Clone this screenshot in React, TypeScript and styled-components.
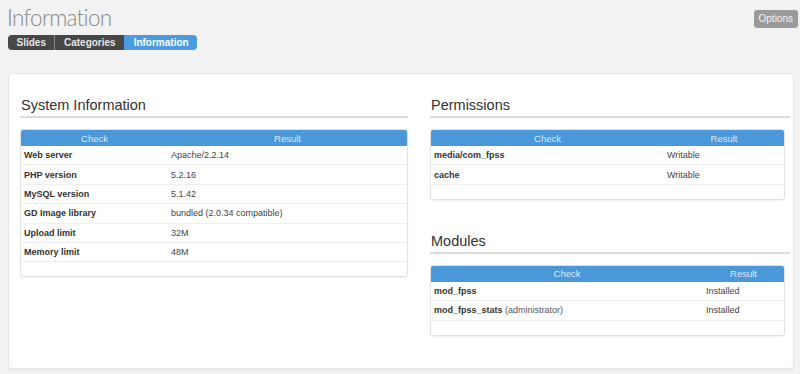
import React from "react";
import styled, { createGlobalStyle } from "styled-components";

const Global = createGlobalStyle`
    html, body{
        margin:0;
        padding:0;
        background:#f2f2f2;
        font-family:'Liberation Sans', Arial, sans-serif;
    }
`

const Page = styled.div`
    width:800px;
    height:374px;
    box-sizing:border-box;
    padding:0 6px 0 8px;
    overflow:hidden;
    font-family:'Liberation Sans', Arial, sans-serif;
`

const TopBar = styled.div`
    display:flex;
    justify-content:space-between;
    align-items:flex-start;
    height:73px;
`

const TitleBlock = styled.div`
    display:flex;
    flex-direction:column;
    h1{
        margin:4px 0 0 -1px;
        font-family:'Lato', 'Open Sans', sans-serif;
        font-weight:300;
        font-size:22.5px;
        line-height:28px;
        color:#888;
        letter-spacing:-0.7px;
    }
`

const Tabs = styled.ul`
    display:flex;
    margin:3px 0 0;
    padding:0;
    list-style:none;
    border-radius:4px;
    overflow:hidden;
    width:fit-content;
`

const Tab = styled.li<{ $active?: boolean }>`
    height:15px;
    line-height:15px;
    padding:0 8.5px;
    font-family:'Liberation Sans', Arial, sans-serif;
    font-weight:700;
    font-size:10px;
    color:${p => p.$active ? "#fff" : "#e4e4e4"};
    background:${p => p.$active ? "#4a9be0" : "#474747"};
    border-left:1px solid ${p => p.$active ? "#4a9be0" : "#888"};
    &:first-child{ border-left:none; }
`

const OptionsBtn = styled.button`
    margin-top:10px;
    margin-right:-4px;
    height:18px;
    padding:0 5px;
    border:none;
    border-radius:3px;
    background:#9a9a9a;
    color:#f4f4f4;
    font-family:'Liberation Sans', Arial, sans-serif;
    font-size:10px;
    line-height:18px;
`

const Panel = styled.div`
    display:flex;
    gap:22px;
    height:296px;
    box-sizing:border-box;
    padding:21px 3px 0 11px;
    background:#fff;
    border:1px solid #e6e6e6;
    border-radius:4px;
    box-shadow:0 1px 2px rgba(0,0,0,0.05);
`

const Column = styled.div<{ $width?: string }>`
    display:flex;
    flex-direction:column;
    width:${p => p.$width || "auto"};
    flex:${p => p.$width ? "none" : "1"};
`

const Section = styled.section<{ $gap?: number }>`
    margin-top:${p => p.$gap || 0}px;
`

const Heading = styled.h2`
    margin:0 0 11px;
    padding:0 0 1px 1px;
    font-family:'Liberation Sans', Arial, sans-serif;
    font-size:14.5px;
    font-weight:400;
    line-height:20px;
    color:#333;
    border-bottom:2px solid #dcdcdc;
`

const Box = styled.div<{ $right?: number }>`
    margin:0 ${p => p.$right || 0}px 0 0;
    border:1px solid #e2e2e2;
    border-radius:3px;
    box-shadow:0 1px 2px rgba(0,0,0,0.06);
    overflow:hidden;
`

const Table = styled.table`
    width:100%;
    border-collapse:collapse;
    font-family:'Liberation Sans', Arial, sans-serif;
    font-size:9px;
    th{
        height:16px;
        padding:0;
        background:#4a98da;
        color:#dcebf8;
        font-weight:400;
        font-size:9.5px;
        text-align:center;
    }
    td{
        height:18.4px;
        padding:0 0 0 3px;
        border-bottom:1px solid #efefef;
        color:#444;
    }
    td b{ color:#333; }
    tr.empty td{ height:14px; border-bottom:none; }
`

const Sub = styled.span`
    color:#555;
`

type Row = [React.ReactNode, string];

const InfoTable = ({ rows, first, right }: { rows: Row[]; first: string; right?: number }) => (
    <Box $right={right}>
        <Table>
            <thead>
                <tr><th style={{ width: first }}>Check</th><th>Result</th></tr>
            </thead>
            <tbody>
                {rows.map((r, i) => (
                    <tr key={i}><td>{r[0]}</td><td>{r[1]}</td></tr>
                ))}
                <tr className="empty"><td colSpan={2} /></tr>
            </tbody>
        </Table>
    </Box>
)

const systemRows: Row[] = [
    [<b>Web server</b>, "Apache/2.2.14"],
    [<b>PHP version</b>, "5.2.16"],
    [<b>MySQL version</b>, "5.1.42"],
    [<b>GD Image library</b>, "bundled (2.0.34 compatible)"],
    [<b>Upload limit</b>, "32M"],
    [<b>Memory limit</b>, "48M"],
];

const permRows: Row[] = [
    [<b>media/com_fpss</b>, "Writable"],
    [<b>cache</b>, "Writable"],
];

const moduleRows: Row[] = [
    [<b>mod_fpss</b>, "Installed"],
    [<><b>mod_fpss_stats</b> <Sub>(administrator)</Sub></>, "Installed"],
];

function App(){
    return(
        <Page>
            <Global />
            <TopBar>
                <TitleBlock>
                    <h1>Information</h1>
                    <Tabs>
                        <Tab>Slides</Tab>
                        <Tab>Categories</Tab>
                        <Tab $active>Information</Tab>
                    </Tabs>
                </TitleBlock>
                <OptionsBtn>Options</OptionsBtn>
            </TopBar>
            <Panel>
                <Column $width="388px">
                    <Section>
                        <Heading>System Information</Heading>
                        <InfoTable rows={systemRows} first="147px" />
                    </Section>
                </Column>
                <Column>
                    <Section>
                        <Heading>Permissions</Heading>
                        <InfoTable rows={permRows} first="233px" right={5} />
                    </Section>
                    <Section $gap={31}>
                        <Heading>Modules</Heading>
                        <InfoTable rows={moduleRows} first="272px" right={5} />
                    </Section>
                </Column>
            </Panel>
        </Page>
    )
}

export default App;
